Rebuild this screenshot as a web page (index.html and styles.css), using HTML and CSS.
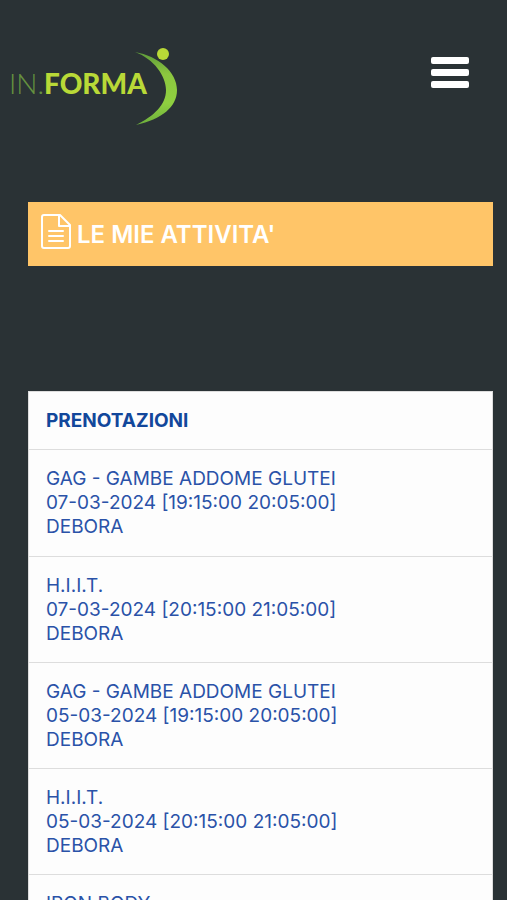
FILE: index.html
```html
<!DOCTYPE html>
<html lang="it">
<head>
	<title>Le mie attivita'</title>
	<meta charset="utf-8">
	<meta name="viewport" content="width=device-width, initial-scale=1">
	<link rel="stylesheet" href="styles.css">
</head>
<body>
	<header class="topbar">
		<a href="#" class="logo">
			<span class="logo-in">IN.</span><span class="logo-forma">FORMA</span>
			<svg class="logo-figure" width="44" height="78" viewBox="0 0 44 78" aria-hidden="true">
				<defs>
					<linearGradient id="swoosh" x1="0" y1="0" x2="0" y2="1">
						<stop offset="0" stop-color="#5c9a3a"/>
						<stop offset="0.3" stop-color="#8cc63f"/>
						<stop offset="0.7" stop-color="#8fd040"/>
						<stop offset="1" stop-color="#6cae3c"/>
					</linearGradient>
				</defs>
				<circle cx="29" cy="6" r="6" fill="#b9d937"/>
				<path d="M1 4C24 8 43 24 43 42C43 59 28 71 2 77C20 68 32 57 32 42C32 28 20 11 1 4Z" fill="url(#swoosh)"/>
			</svg>
		</a>
		<button type="button" class="menubtn" aria-label="Menu">
			<span></span>
			<span></span>
			<span></span>
		</button>
	</header>

	<main class="content">
		<h1 class="pagetitle">
			<svg width="30" height="35" viewBox="0 0 30 35" fill="none" stroke="#fff" stroke-width="2" stroke-linejoin="round" stroke-linecap="round" aria-hidden="true">
				<path d="M3 1H19L29 11V32Q29 34 27 34H3Q1 34 1 32V3Q1 1 3 1Z"/>
				<path d="M18 1V12H29"/>
				<path d="M8 17H22M8 22H22M8 27H22"/>
			</svg>
			<span>LE MIE ATTIVITA'</span>
		</h1>

		<section class="panel">
			<h2>PRENOTAZIONI</h2>
			<ul>
				<li>GAG - GAMBE ADDOME GLUTEI<br>07-03-2024 [19:15:00 20:05:00]<br>DEBORA</li>
				<li>H.I.I.T.<br>07-03-2024 [20:15:00 21:05:00]<br>DEBORA</li>
				<li>GAG - GAMBE ADDOME GLUTEI<br>05-03-2024 [19:15:00 20:05:00]<br>DEBORA</li>
				<li>H.I.I.T.<br>05-03-2024 [20:15:00 21:05:00]<br>DEBORA</li>
				<li>IRON BODY</li>
			</ul>
		</section>
	</main>
</body>
</html>
```

FILE: styles.css
```css
* {
	box-sizing: border-box;
}
body {
	margin: 0;
	background-color: #2a3235;
	font-family: Inter, "Liberation Sans", sans-serif;
}
.topbar {
	display: flex;
	justify-content: space-between;
	align-items: flex-start;
	padding: 48px 38px 0 9px;
}
.logo {
	display: flex;
	align-items: center;
	height: 78px;
	font-family: Lato, sans-serif;
	font-size: 28px;
	line-height: 28px;
	text-decoration: none;
}
.logo span {
	padding-bottom: 8px;
}
.logo-in {
	font-weight: 300;
	color: #65913f;
}
.logo-forma {
	font-weight: 900;
	color: #b9d937;
}
.logo-figure {
	margin-left: -13px;
}
.menubtn {
	display: flex;
	flex-direction: column;
	gap: 5px;
	margin-top: 9px;
	padding: 0;
	border: 0;
	background: none;
	cursor: pointer;
}
.menubtn span {
	width: 38px;
	height: 7px;
	border-radius: 2px;
	background-color: #fff;
}
.content {
	padding: 76px 14px 0 28px;
}
.pagetitle {
	display: flex;
	align-items: center;
	gap: 6px;
	margin: 0 0 125px;
	padding: 12px 13px 17px;
	background-color: #ffc568;
	color: #fff;
	font-size: 24px;
	font-weight: 600;
	line-height: 35px;
}
.pagetitle span {
	padding-top: 6px;
	line-height: 29px;
}
.panel {
	border: 1px solid #ddd;
	background-color: #fdfdfd;
	color: #2a52a8;
	font-size: 19px;
	line-height: 24px;
}
.panel h2 {
	margin: 0;
	padding: 17px 17px 16px;
	color: #12479b;
	font-size: 19px;
	font-weight: 700;
}
.panel ul {
	margin: 0;
	padding: 0;
	list-style-type: none;
}
.panel li {
	padding: 17px 17px 16px;
	border-top: 1px solid #ddd;
}
.panel li:first-child {
	padding-bottom: 17px;
}
```
